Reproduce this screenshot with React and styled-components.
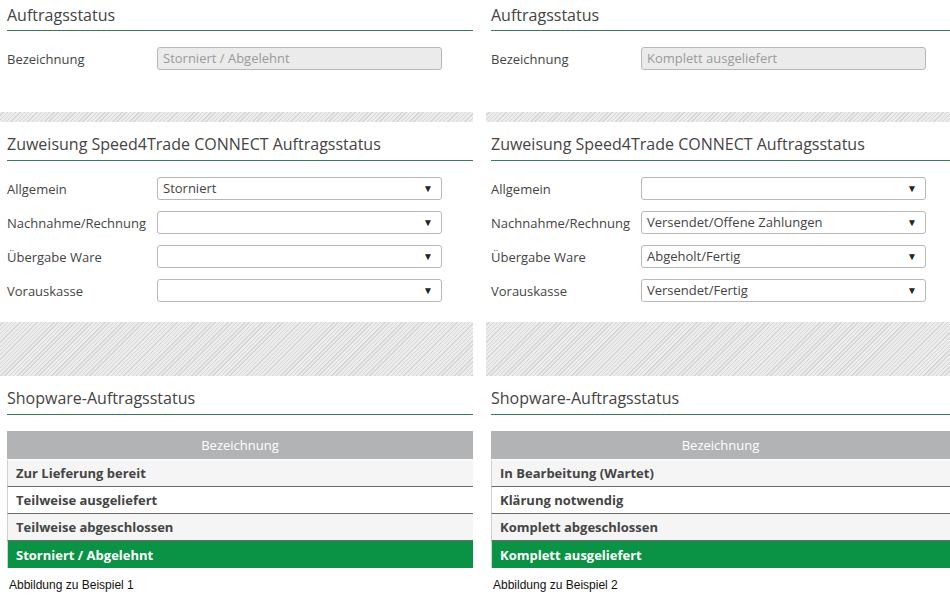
import React from "react";
import styled, { createGlobalStyle } from "styled-components";

const GlobalStyle = createGlobalStyle`
    html, body {
        margin: 0;
        padding: 0;
        background: #fff;
    }
    body {
        font-family: "Open Sans", "Liberation Sans", sans-serif;
        color: #444;
    }
`;

const Page = styled.div`
    width: 950px;
    height: 602px;
    overflow: hidden;
    display: grid;
    grid-template-columns: 473px 464px;
    column-gap: 13px;
`;

const Panel = styled.div`
    display: flex;
    flex-direction: column;
`;

const Inner = styled.div`
    padding-left: ${p => p.$pad}px;
`;

const Heading = styled.h2`
    margin: 0;
    font-size: 16px;
    font-weight: 400;
    color: #444;
    line-height: 22px;
    padding-top: ${p => p.$top}px;
    padding-bottom: ${p => p.$bottom}px;
    border-bottom: 1px solid #3d7a5c;
`;

const Stripes = styled.div`
    height: ${p => p.$h}px;
    background-color: #ececec;
    background-image: repeating-linear-gradient(
        135deg,
        #ececec 0px,
        #ececec 2px,
        #d6d6d6 2px,
        #d6d6d6 3px
    );
`;

const FieldList = styled.div`
    display: flex;
    flex-direction: column;
    gap: 11px;
    padding-top: ${p => p.$top}px;
    padding-bottom: ${p => p.$bottom}px;
`;

const FieldRow = styled.div`
    display: grid;
    grid-template-columns: 150px 285px;
    align-items: center;
    height: 23px;
`;

const Label = styled.span`
    font-size: 13px;
    color: #444;
    padding-top: 1px;
`;

const Input = styled.div`
    box-sizing: border-box;
    height: 23px;
    border: 1px solid #b8b8b8;
    border-radius: 3px;
    background: ${p => (p.$disabled ? "#ebebeb" : "#fff")};
    color: ${p => (p.$disabled ? "#9a9a9a" : "#444")};
    font-size: 13px;
    line-height: 21px;
    padding: 0 7px 0 5px;
    display: flex;
    justify-content: space-between;
    align-items: center;
`;

const Caret = styled.span`
    font-size: 10px;
    color: #222;
    margin-right: 1px;
`;

const Table = styled.div`
    margin-top: 16px;
    display: flex;
    flex-direction: column;
`;

const TableHead = styled.div`
    height: 28px;
    background: #b2b3b5;
    color: #fff;
    font-size: 13px;
    display: flex;
    align-items: center;
    justify-content: center;
    margin-bottom: 1px;
`;

const TableRow = styled.div`
    box-sizing: border-box;
    height: 27px;
    padding-left: 8px;
    display: flex;
    align-items: center;
    font-size: 13px;
    font-weight: 700;
    background: ${p => (p.$active ? "#0a9345" : p.$odd ? "#f5f5f5" : "#fff")};
    color: ${p => (p.$active ? "#fff" : "#444")};
    border-bottom: ${p => (p.$last ? "none" : "1px solid #6a6a6a")};
    border-left: 1px solid #d0d0d0;
`;

const Caption = styled.div`
    font-family: "Liberation Sans", Arial, sans-serif;
    font-size: 12px;
    color: #111;
    padding-top: 10px;
    padding-left: 2px;
`;

const Select = ({ value }) => (
    <Input>
        <span>{value}</span>
        <Caret>▼</Caret>
    </Input>
);

const selectLabels = ["Allgemein", "Nachnahme/Rechnung", "Übergabe Ware", "Vorauskasse"];

const examples = [
    {
        pad: 7,
        status: "Storniert / Abgelehnt",
        selects: ["Storniert", "", "", ""],
        rows: ["Zur Lieferung bereit", "Teilweise ausgeliefert", "Teilweise abgeschlossen", "Storniert / Abgelehnt"],
        caption: "Abbildung zu Beispiel 1",
    },
    {
        pad: 5,
        status: "Komplett ausgeliefert",
        selects: ["", "Versendet/Offene Zahlungen", "Abgeholt/Fertig", "Versendet/Fertig"],
        rows: ["In Bearbeitung (Wartet)", "Klärung notwendig", "Komplett abgeschlossen", "Komplett ausgeliefert"],
        caption: "Abbildung zu Beispiel 2",
    },
];

const Example = ({ data }) => (
    <Panel>
        <Inner $pad={data.pad}>
            <Heading $top={4} $bottom={4}>Auftragsstatus</Heading>
            <FieldList $top={16} $bottom={42}>
                <FieldRow>
                    <Label>Bezeichnung</Label>
                    <Input $disabled>{data.status}</Input>
                </FieldRow>
            </FieldList>
        </Inner>
        <Stripes $h={10} />
        <Inner $pad={data.pad}>
            <Heading $top={11} $bottom={5}>Zuweisung Speed4Trade CONNECT Auftragsstatus</Heading>
            <FieldList $top={16} $bottom={20}>
                {selectLabels.map((l, i) => (
                    <FieldRow key={l}>
                        <Label>{l}</Label>
                        <Select value={data.selects[i]} />
                    </FieldRow>
                ))}
            </FieldList>
        </Inner>
        <Stripes $h={54} />
        <Inner $pad={data.pad}>
            <Heading $top={11} $bottom={5}>Shopware-Auftragsstatus</Heading>
            <Table>
                <TableHead>Bezeichnung</TableHead>
                {data.rows.map((r, i) => (
                    <TableRow key={r} $odd={i % 2 === 0} $active={i === 3} $last={i === 3}>
                        {r}
                    </TableRow>
                ))}
            </Table>
            <Caption>{data.caption}</Caption>
        </Inner>
    </Panel>
);

const App = () => (
    <>
        <GlobalStyle />
        <Page>
            {examples.map(e => (
                <Example key={e.caption} data={e} />
            ))}
        </Page>
    </>
);

export default App;
